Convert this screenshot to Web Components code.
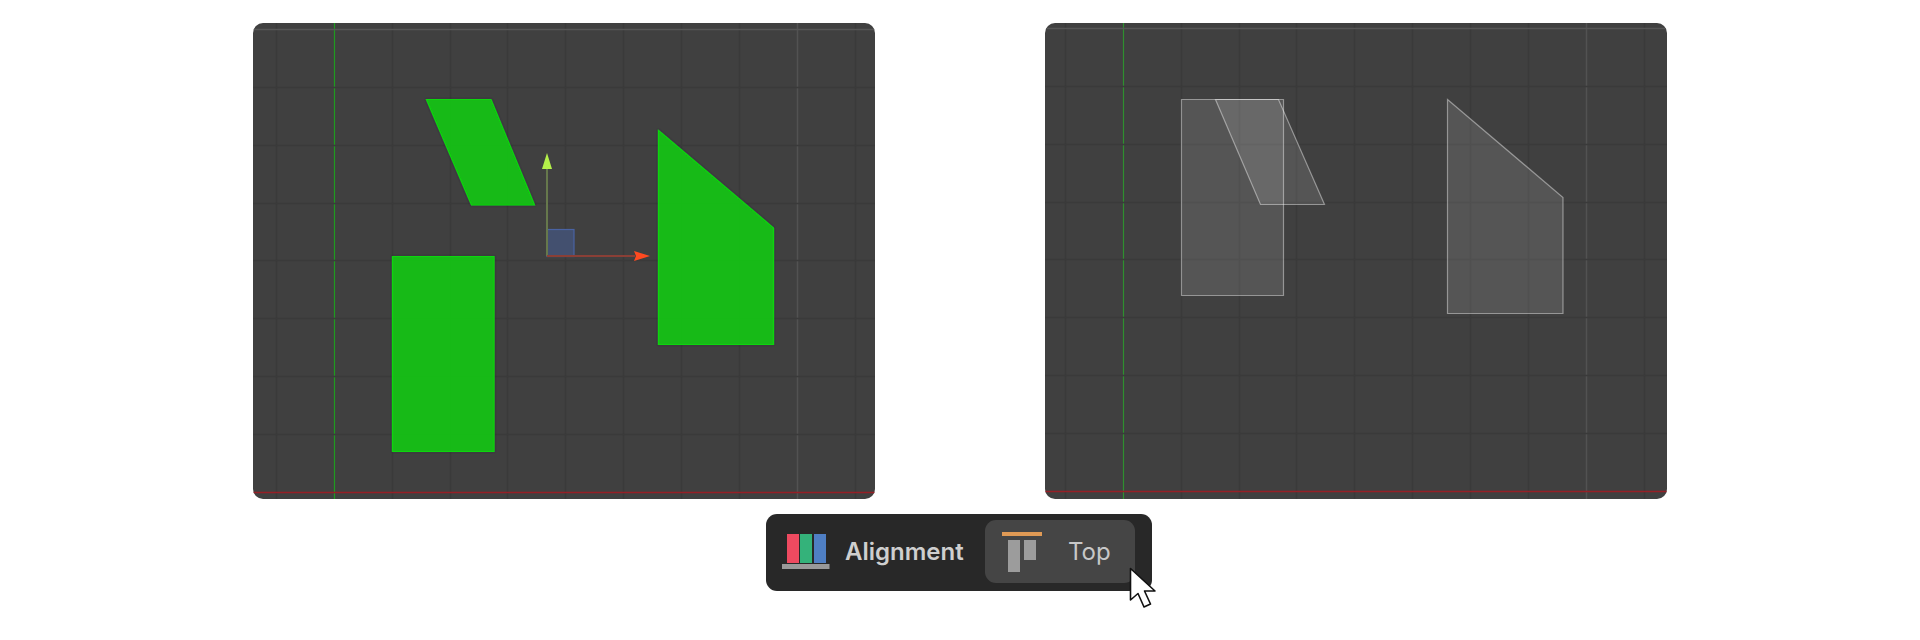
<!DOCTYPE html>
<html lang="en"><head><meta charset="utf-8"><title>Alignment</title>
<style>html,body{margin:0;background:#fff}body{width:1920px;height:640px;overflow:hidden;font-family:Inter,sans-serif}</style>
</head><body>
<align-demo>
  <cad-viewport slot="left" variant="selected"></cad-viewport>
  <cad-viewport slot="right" variant="ghost"></cad-viewport>
  <align-toolbar slot="bar"></align-toolbar>
</align-demo>
<script>
class AlignDemo extends HTMLElement{
  constructor(){super();this.attachShadow({mode:'open'}).innerHTML=`<style>
  :host{display:flex;flex-direction:column;align-items:center;padding-top:23px;width:1920px;box-sizing:border-box}
  .row{display:flex;gap:170px;margin-left:-1px}
  .bar{margin-top:15px;margin-left:-2px}
  </style><div class="row"><slot name="left"></slot><slot name="right"></slot></div><div class="bar"><slot name="bar"></slot></div>`;}
}
class CadViewport extends HTMLElement{
  constructor(){super();
    const ghost=this.getAttribute('variant')==='ghost';
    const W=622,H=476;
    const ox=ghost?20:23;
    const oy=ghost?5:6;
    const step=57.85;
    let lines='';
    for(let i=0;i<11;i++){const x=Math.round(ox+step*i)+.5;
      let c='#3a3a3a',w=1.5;
      if(i===1){c=ghost?'#2f8f2f':'#1f9a1f';w=1.2;}
      if(i===9)c='#525252';
      lines+=`<line x1="${x}" y1="0" x2="${x}" y2="${H}" stroke="${c}" stroke-width="${w}"/>`;}
    for(let j=0;j<9;j++){const y=Math.round(oy+step*j)+.5;
      let c='#3a3a3a',w=1.5;
      if(j===0)c='#565656';
      if(j===8){c='#961f26';w=1.3;}
      lines+=`<line x1="0" y1="${y}" x2="${W}" y2="${y}" stroke="${c}" stroke-width="${w}"/>`;}
    let shapes='';
    if(!ghost){
      const st='fill="#13bd13" fill-opacity=".97" stroke="#0fd60f" stroke-width="1.2" filter="url(#s)"';
      shapes=`
      <defs><filter id="s" x="-10%" y="-10%" width="120%" height="120%"><feDropShadow dx="0" dy="0" stdDeviation="1" flood-color="#2a1f3a" flood-opacity=".55"/></filter></defs>
      <polygon ${st} points="173.5,76.5 238,76.5 281.5,182 218.5,182"/>
      <polygon ${st} points="139.5,233.5 241,233.5 241,428.5 139.5,428.5"/>
      <polygon ${st} points="405.5,107.5 520.5,205 520.5,321.5 405.5,321.5"/>
      <rect x="294" y="206.5" width="27" height="27" fill="#43506f" stroke="#4a63a3" stroke-width="1.2"/>
      <line x1="294" y1="233" x2="294" y2="146" stroke="#66784c" stroke-width="2"/>
      <line x1="294" y1="233" x2="382" y2="233" stroke="#8a3f36" stroke-width="2"/>
      <polygon points="294,130 289,146 299,146" fill="#b4f04a"/>
      <polygon points="397,233 381,228 383,233 381,238" fill="#ff4a20"/>`;
    }else{
      const st='fill="rgba(255,255,255,.115)" stroke="rgba(255,255,255,.42)" stroke-width="1.2"';
      shapes=`
      <polygon ${st} points="136.5,76.5 238.5,76.5 238.5,272.5 136.5,272.5"/>
      <polygon ${st} points="170.5,76.5 233.5,76.5 279.5,181.5 215.5,181.5"/>
      <polygon ${st} points="402.5,76.5 518,174.5 518,290.5 402.5,290.5"/>`;
    }
    this.attachShadow({mode:'open'}).innerHTML=`<style>
    :host{display:block;width:${W}px;height:${H}px;border-radius:10px;overflow:hidden;background:#404040}
    svg{display:block}
    </style><svg width="${W}" height="${H}" viewBox="0 0 ${W} ${H}">${lines}${shapes}</svg>`;
  }
}
class AlignToolbar extends HTMLElement{
  constructor(){super();this.attachShadow({mode:'open'}).innerHTML=`<style>
  :host{display:flex;position:relative;align-items:center;box-sizing:border-box;width:386px;height:77px;background:#282828;border-radius:11px;padding:6px 17px 8px 16px;font-family:Inter,sans-serif;color:#cfcfcf}
  .label{font-size:24px;font-weight:600;margin-left:14px;white-space:nowrap;line-height:1}
  .btn{display:flex;align-items:center;margin-left:auto;width:150px;height:63px;box-sizing:border-box;background:#454545;border-radius:11px;padding-left:16px}
  .top{font-size:24px;font-weight:400;margin-left:25px;line-height:1;color:#c8c8c8}
  svg{display:block;flex:none}
  .cursor{position:absolute;left:363px;top:53px}
  </style>
  <svg width="49" height="38" viewBox="0 0 49 38"><g transform="translate(0,1)">
    <rect x="5" y="0" width="12" height="29" fill="#ee4a60"/><rect x="18" y="0" width="12" height="29" fill="#34b27a"/><rect x="32" y="0" width="12" height="29" fill="#4f7fc4"/>
    <rect x="0" y="30" width="47.5" height="5" fill="#999"/></g></svg>
  <span class="label">Alignment</span>
  <div class="btn">
    <svg width="42" height="42" viewBox="0 0 42 42"><rect x="1" y="1" width="40" height="4" fill="#e09a55"/><rect x="7" y="9" width="12" height="32" fill="#9c9c9c"/><rect x="23" y="9" width="12" height="20" fill="#9c9c9c"/></svg>
    <span class="top">Top</span>
  </div>
  <svg class="cursor" width="28" height="42" viewBox="0 0 28 42"><path d="M1.5 1.5 L1.5 33 L9 26.5 L15 40 L21.5 37 L15.5 24 L26 24 Z" fill="#fff" stroke="#111" stroke-width="1.6" stroke-linejoin="round"/></svg>`;}
}
customElements.define('align-demo',AlignDemo);
customElements.define('cad-viewport',CadViewport);
customElements.define('align-toolbar',AlignToolbar);
</script>
</body></html>
